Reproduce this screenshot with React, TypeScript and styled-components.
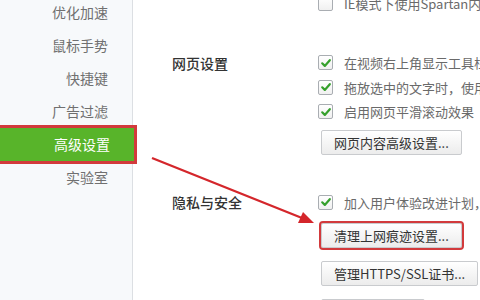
import React from "react";
import styled, { createGlobalStyle } from "styled-components";

const GlobalStyle = createGlobalStyle`
  html, body {
    margin: 0;
    padding: 0;
    background: #fff;
  }
  body {
    width: 480px;
    height: 300px;
    overflow: hidden;
    font-family: "Noto Sans CJK SC", "Noto Sans", "Liberation Sans", sans-serif;
  }
`;

const navItems = ["优化加速", "鼠标手势", "快捷键", "广告过滤", "高级设置", "实验室"];

type Option = { label: string; checked: boolean };
type Section = { title?: string; options: Option[]; buttons: { label: string; marked?: boolean }[] };

const sections: Section[] = [
  {
    options: [{ label: "IE模式下使用Spartan内核", checked: false }],
    buttons: [],
  },
  {
    title: "网页设置",
    options: [
      { label: "在视频右上角显示工具栏", checked: true },
      { label: "拖放选中的文字时，使用默认搜索引擎搜索", checked: true },
      { label: "启用网页平滑滚动效果", checked: true },
    ],
    buttons: [{ label: "网页内容高级设置..." }],
  },
  {
    title: "隐私与安全",
    options: [{ label: "加入用户体验改进计划，帮助我们改进产品", checked: true }],
    buttons: [
      { label: "清理上网痕迹设置...", marked: true },
      { label: "管理HTTPS/SSL证书..." },
      { label: "管理表单数据" },
    ],
  },
];

export default function App() {
  return (
    <>
      <GlobalStyle />
      <Page>
        <Sidebar>
          <NavList>
            {navItems.map((item) => (
              <NavItem key={item} $active={item === "高级设置"}>
                {item}
              </NavItem>
            ))}
          </NavList>
        </Sidebar>
        <Content>
          {sections.map((section, i) => (
            <SectionRow key={i}>
              <SectionTitle>{section.title}</SectionTitle>
              <SectionBody>
                {section.options.map((opt) => (
                  <OptionRow key={opt.label}>
                    <Checkbox>
                      {opt.checked && (
                        <svg width="12" height="12" viewBox="0 0 12 12">
                          <path
                            d="M2.2 6.3 L4.8 8.9 L9.8 3.2"
                            fill="none"
                            stroke="#35a02c"
                            strokeWidth="2.2"
                            strokeLinecap="round"
                            strokeLinejoin="round"
                          />
                        </svg>
                      )}
                    </Checkbox>
                    <OptionLabel>{opt.label}</OptionLabel>
                  </OptionRow>
                ))}
                <ButtonStack>
                  {section.buttons.map((b) => (
                    <Button key={b.label} $marked={b.marked}>
                      {b.label}
                    </Button>
                  ))}
                </ButtonStack>
              </SectionBody>
            </SectionRow>
          ))}
        </Content>
        <Arrow width="480" height="300" viewBox="0 0 480 300">
          <line x1="152" y1="158" x2="302" y2="218" stroke="#d4262b" strokeWidth="2.2" />
          <polygon points="314,223 298,223 303,212" fill="#d4262b" />
        </Arrow>
      </Page>
    </>
  );
}

const Page = styled.div`
  position: relative;
  display: flex;
  width: 480px;
  height: 300px;
  overflow: hidden;
`;

const Sidebar = styled.div`
  width: 132px;
  flex-shrink: 0;
  background: #f7f9fb;
  border-right: 1px solid #dcdfe3;
`;

const NavList = styled.div`
  display: flex;
  flex-direction: column;
  margin-top: -4px;
`;

const NavItem = styled.div<{ $active?: boolean }>`
  position: relative;
  z-index: 1;
  height: 33px;
  line-height: 33px;
  padding-right: 24px;
  text-align: right;
  font-size: 14px;
  color: ${(p) => (p.$active ? "#fff" : "#707070")};
  background: ${(p) => (p.$active ? "#58b42a" : "transparent")};
  width: ${(p) => (p.$active ? "110px" : "108px")};
  outline: ${(p) => (p.$active ? "3px solid #d23a3c" : "none")};
`;

const Content = styled.div`
  flex: 1;
  display: flex;
  flex-direction: column;
  gap: 35px;
  margin-top: -9px;
`;

const SectionRow = styled.div`
  display: flex;
`;

const SectionTitle = styled.div`
  width: 146px;
  padding-left: 39px;
  flex-shrink: 0;
  height: 24px;
  line-height: 24px;
  font-size: 14px;
  font-weight: 500;
  color: #333;
  white-space: nowrap;
`;

const SectionBody = styled.div`
  display: flex;
  flex-direction: column;
  align-items: flex-start;
  min-width: 0;
`;

const OptionRow = styled.div`
  display: flex;
  align-items: center;
  height: 24.5px;
  white-space: nowrap;
`;

const Checkbox = styled.span`
  width: 13px;
  height: 13px;
  border: 1px solid #a9adb2;
  border-radius: 2px;
  background: linear-gradient(#ffffff, #f0f0f0);
  display: flex;
  align-items: center;
  justify-content: center;
  flex-shrink: 0;
`;

const OptionLabel = styled.span`
  margin-left: 11px;
  font-size: 13px;
  color: #6a6a6a;
`;

const ButtonStack = styled.div`
  display: flex;
  flex-direction: column;
  align-items: flex-start;
  gap: 13px;
  &:empty {
    display: none;
  }
`;

const Button = styled.div<{ $marked?: boolean }>`
  box-sizing: border-box;
  height: 25px;
  line-height: 23px;
  margin-top: ${(p) => (p.$marked ? "8px" : "6px")};
  margin-left: 3px;
  padding: 0 12px;
  font-size: 13px;
  color: #333;
  white-space: nowrap;
  border: 1px solid #c9cbce;
  border-radius: 2px;
  background: linear-gradient(#ffffff, #ececec);
  outline: ${(p) => (p.$marked ? "2px solid #d23a3c" : "none")};
  & + & {
    margin-top: 0;
  }
`;

const Arrow = styled.svg`
  position: absolute;
  left: 0;
  top: 0;
  pointer-events: none;
  z-index: 2;
`;
